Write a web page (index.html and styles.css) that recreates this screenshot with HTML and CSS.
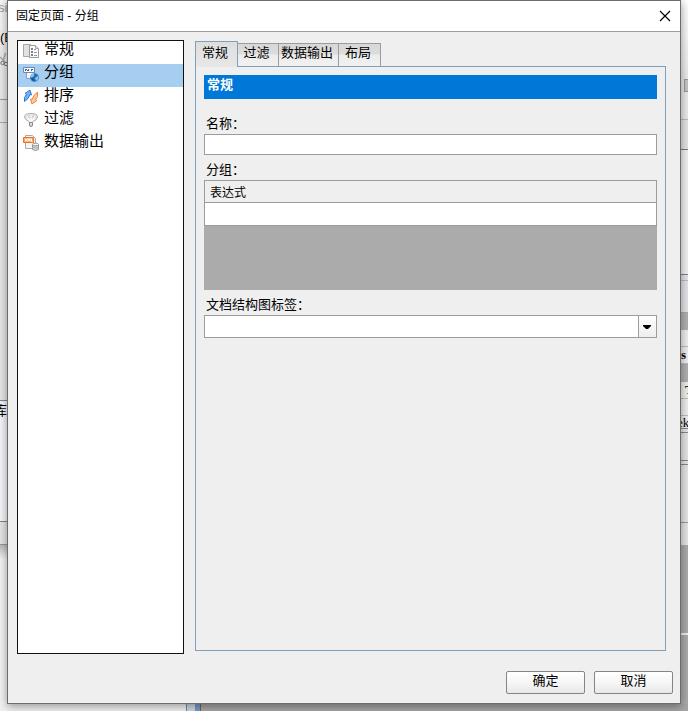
FILE: index.html
```html
<!DOCTYPE html>
<html lang="zh-CN">
<head>
<meta charset="utf-8">
<title>固定页面 - 分组</title>
<meta name="viewport" content="width=device-width, initial-scale=1">
<link rel="stylesheet" href="styles.css">
</head>
<body>
<div class="desktop">
  <div class="edge edge-left" aria-hidden="true">
    <div class="caption"><span>sig</span></div>
    <div class="menu"><span>(B</span></div>
    <div class="tools">
      <svg width="9" height="16" viewBox="0 0 9 16"><path d="M7.500 1L5 9M2 5l5 5" stroke="#aaa" stroke-width="1.500" fill="none"/><circle cx="4.500" cy="11" r="1.700" stroke="#777" fill="none"/><circle cx="8" cy="12" r="1.700" stroke="#777" fill="none"/></svg>
    </div>
    <div class="bar"></div>
    <div class="side"></div>
    <div class="tree"><span>库</span></div>
    <div class="status"></div>
    <div class="page"></div>
  </div>

  <main class="dialog">
    <header class="titlebar">
      <h1>固定页面 - 分组</h1>
      <button class="close" type="button" aria-label="关闭">
        <svg width="12" height="12" viewBox="0 0 12 12"><path d="M1 1l10 10M11 1L1 11" stroke="#000" stroke-width="1.2" fill="none"/></svg>
      </button>
    </header>
    <div class="content">
      <ul class="categories">
        <li><button type="button">
          <svg width="16" height="16" viewBox="0 0 16 16"><path d="M.5 1.500h7v12h-7z" fill="#e2e2e2" stroke="#a8a8a8"/><path d="M6.500 2.500h6l3 3v9h-9z" fill="#fafafa" stroke="#999"/><path d="M12.500 2.500v3h3" fill="#ddd" stroke="#aaa"/><path d="M8 6h2" stroke="#4a90d0" stroke-width="2"/><path d="M8 9h2" stroke="#f05a20" stroke-width="2"/><path d="M8 12h2" stroke="#3a94b8" stroke-width="2"/><path d="M11 6.500h2M11 9.500h3M11 12.500h3" stroke="#999"/></svg>
          <span>常规</span></button></li>
        <li><button type="button" class="selected" aria-current="true">
          <svg width="16" height="16" viewBox="0 0 16 16"><path d="M3.500 3.500h8v9h-8z" fill="#f3f5fa" stroke="#8a9cc0"/><path d="M.5 1.500h11v5H.5z" fill="#f5f8fd" stroke="#7187b4"/><path d="M2 3.500h2M5 3.500h1M8 3.500h2M2 4.500h1M4 4.500h2M8 4.500h1" stroke="#3f5f9c"/><circle cx="11.500" cy="11.500" r="4.300" fill="#286fb7"/><path d="M7.500 11q1-4 4-3.500l-1 3-2 1zM12 12l3-2q1 3-2 5z" fill="#8fc9ee"/><path d="M9.500 12l2 2-1 1-2-2z" fill="#174d8c"/></svg>
          <span>分组</span></button></li>
        <li><button type="button">
          <svg width="16" height="16" viewBox="0 0 16 16"><path d="M1.500 12.500v-4l2-3-1.500-1 5-3.500 1.500 5-1.500-.5-2 4z" fill="#6fb2fa" stroke="#2e78dc" stroke-linejoin="round"/><path d="M14.500 3v4.500l-2 3 1.500 1-5 3.500-1.500-5 1.500.5 2-4z" fill="#ffc797" stroke="#ef8146" stroke-linejoin="round"/></svg>
          <span>排序</span></button></li>
        <li><button type="button">
          <svg width="16" height="16" viewBox="0 0 16 16"><path d="M1.500 5q0-3.500 6.500-3.500T14.500 5q0 2.500-5 5v4q-1.500 1.500-3 0v-4q-5-2.500-5-5z" fill="#eee" stroke="#aaa"/><ellipse cx="8" cy="4.500" rx="5" ry="2" fill="#d6d6d6"/><path d="M4 3.500l3 6M12 3.500l-3 6M8 2.500v7" stroke="#fff"/><path d="M6.500 10.500h3v3q-1.500 2-3 0z" fill="#ddd" stroke="#888"/></svg>
          <span>过滤</span></button></li>
        <li><button type="button">
          <svg width="16" height="16" viewBox="0 0 16 16"><path d="M2.500.5h7l3 3v10h-10z" fill="#f5f5f5" stroke="#aaa"/><path d="M.5 2.500h10v5H.5z" fill="#ff9a50" stroke="#ed7326"/><path d="M2 3.500l2 3M4 3.500l-2 3M5 6.500v-3l1 2 1-2v3M8.500 3.500v3h1" stroke="#fff" fill="none"/><path d="M9.500 9.500h6v5q-3 2-6 0z" fill="#d6d6d6" stroke="#999"/><ellipse cx="12.500" cy="9.500" rx="3" ry="1.300" fill="#f5f5f5" stroke="#999"/><path d="M9.500 12q3 2 6 0" fill="none" stroke="#aaa"/></svg>
          <span>数据输出</span></button></li>
      </ul>

      <section class="settings">
        <div class="tabs" role="tablist">
          <button class="tab active" type="button" role="tab" aria-selected="true">常规</button>
          <button class="tab" type="button" role="tab" aria-selected="false">过滤</button>
          <button class="tab wide" type="button" role="tab" aria-selected="false">数据输出</button>
          <button class="tab" type="button" role="tab" aria-selected="false">布局</button>
        </div>
        <div class="panel" role="tabpanel">
          <h2>常规</h2>
          <div class="field first">
            <label for="name">名称：</label>
            <input id="name" type="text">
          </div>
          <div class="field">
            <label id="group-label" for="expression">分组：</label>
            <div class="grid-box">
              <table aria-labelledby="group-label">
                <thead><tr><th>表达式</th></tr></thead>
                <tbody><tr><td><input id="expression" type="text"></td></tr></tbody>
              </table>
            </div>
          </div>
          <div class="field">
            <label for="doc-map">文档结构图标签：</label>
            <div class="combo">
              <select id="doc-map"><option></option></select>
              <span class="arrow"><svg width="8" height="4" viewBox="0 0 8 4"><path d="M0 0h8v1L5 4H3L0 1z" fill="#000"/></svg></span>
            </div>
          </div>
        </div>
      </section>
    </div>
    <footer class="actions">
      <button type="button">确定</button>
      <button type="button">取消</button>
    </footer>
  </main>

  <div class="edge edge-right" aria-hidden="true">
    <div class="ribbon"></div>
    <div class="slider"><i></i></div>
    <div class="ribbon-end"></div>
    <div class="ruler"></div>
    <div class="canvas"></div>
    <div class="gap"></div>
    <div class="props-head"></div>
    <div class="dark"></div>
    <div class="row"></div>
    <div class="row"><b>s</b></div>
    <div class="dark"></div>
    <div class="row indent"><b>T</b></div>
    <div class="row"></div>
    <div class="row short"><span>ek</span></div>
    <div class="gap small"></div>
    <div class="help"></div>
    <div class="gap small"></div>
    <div class="output"></div>
    <div class="status"></div>
    <div class="work"></div>
    <div class="work-end"></div>
  </div>

  <div class="below" aria-hidden="true"><i class="paper"></i><i class="frame"></i><i class="blue"></i><i class="dark-area"></i></div>
</div>
</body>
</html>
```

FILE: styles.css
```css
* { box-sizing: border-box; }

body {
  margin: 0;
  font-family: "Liberation Sans", "Noto Sans CJK SC", sans-serif;
  font-size: 13px;
  line-height: 16px;
  color: #000;
}

button, input, select { font: inherit; color: inherit; border-radius: 0; }

.desktop {
  display: grid;
  grid-template-columns: 7px minmax(0, 1fr) 7px;
  grid-template-rows: 1fr 7px;
  min-height: 100vh;
  overflow: hidden;
  background: #999;
}

/* Dialog */
.dialog {
  position: relative;
  display: flex;
  flex-direction: column;
  background: #efefef;
  border: 1px solid #6c6c6c;
  box-shadow: 0 2px 9px rgba(0, 0, 0, .4);
}

.titlebar {
  display: flex;
  align-items: center;
  justify-content: space-between;
  height: 31px;
  padding: 0 8px;
  background: #fff;
  border-bottom: 1px solid #9c9c9c;
}

h1 { margin: 0; font-size: 12px; font-weight: 400; }

.close {
  display: flex;
  padding: 1px;
  border: 0;
  background: none;
}

.content {
  flex: 1;
  display: flex;
  gap: 11px;
  padding: 8px 14px 0 9px;
}

.categories {
  width: 167px;
  margin: 0;
  padding: 0;
  list-style: none;
  background: #fff;
  border: 1px solid #111;
}

.categories button {
  display: flex;
  align-items: flex-start;
  gap: 5px;
  width: 100%;
  height: 23px;
  padding: 0 5px;
  border: 0;
  background: none;
  font-size: 15px;
  line-height: 16px;
}

.categories svg { flex: none; margin-top: 2px; }
.categories .selected { background: #a5cef1; }

.settings {
  flex: 1;
  display: flex;
  flex-direction: column;
  padding-bottom: 3px;
}

.tabs {
  position: relative;
  display: flex;
  align-items: flex-end;
  height: 27px;
  margin-bottom: -1px;
}

.tab {
  width: 41px;
  height: 24px;
  padding: 0 3px 5px 0;
  border: 1px solid #9c9c9c;
  border-left: 0;
  border-bottom-color: #7f9fba;
  background: linear-gradient(#d7d7d7, #dcdcdc 45%, #ececec 50%, #f1f1f1);
}

.tab.wide { width: 60px; }
.tab:last-child { width: 42px; }

.tab.active {
  width: 43px;
  height: 26px;
  padding-bottom: 4px;
  border: 1px solid #7f9fba;
  border-bottom: 0;
  background: linear-gradient(#dedede, #e7e7e7);
}

.panel {
  flex: 1;
  padding: 8px;
  border: 1px solid #7f9fba;
}

h2 {
  height: 24px;
  margin: 0;
  padding: 2px 3px;
  background: #0078d7;
  color: #fff;
  font-size: 13px;
  font-weight: 700;
}

.field { margin-top: 7px; }
.field.first { margin-top: 17px; }

label { display: block; height: 18px; padding-left: 2px; }

.field > input {
  display: block;
  width: 100%;
  height: 21px;
  padding: 0 3px;
  border: 1px solid #9c9c9c;
  background: #fff;
}

.grid-box { height: 110px; background: #ababab; }

table {
  width: 100%;
  border-collapse: collapse;
  background: #fff;
  font-size: 12px;
}

th, td { height: 22px; padding: 0; border: 1px solid #9c9c9c; }
th { padding: 3px 5px 0; background: #efefef; font-weight: 400; text-align: left; }
td input { display: block; width: 100%; height: 22px; padding: 0 5px; border: 0; background: none; }

.combo { position: relative; }

select {
  display: block;
  width: 100%;
  height: 23px;
  padding: 0 22px 0 3px;
  appearance: none;
  border: 1px solid #9c9c9c;
  background: #fff;
}

.arrow {
  position: absolute;
  inset: 1px 1px 1px auto;
  display: flex;
  align-items: center;
  justify-content: center;
  width: 18px;
  padding-right: 1px;
  border-left: 1px solid #9c9c9c;
  background: linear-gradient(#fff, #eee);
  pointer-events: none;
}

.actions {
  display: flex;
  justify-content: flex-end;
  gap: 9px;
  padding: 17px 7px 9px;
}

.actions button {
  width: 79px;
  height: 23px;
  padding: 0 0 4px;
  border: 1px solid #858585;
  border-radius: 2px;
  background: linear-gradient(#fff, #f6f6f6 50%, #e8e8e8);
}

/* Application window behind the dialog */
.edge { display: flex; flex-direction: column; overflow: hidden; }
.edge > div { flex: none; overflow: hidden; white-space: nowrap; }

.edge-left > .caption { height: 30px; background: #f5f5f5; color: #999; }
.edge-left > .menu { height: 22px; background: #eee; }
.edge-left > .tools { height: 47px; background: #eaeaea; }
.edge-left > .bar { height: 24px; border-top: 1px solid #999; border-bottom: 1px solid #aaa; background: #e7e7e7; }
.edge-left > .side { height: 277px; background: #e7e7e7; }
.edge-left > .tree {
  height: 121px;
  padding-top: 2px;
  border-top: 1px solid #85868d;
  background: #f5f6f9;
  display: flex;
  justify-content: flex-end;
}
.edge-left > .status { height: 24px; border-top: 1px solid #85868d; border-bottom: 1px solid #999; background: #e5e5e5; }
.edge-left > .page { flex: 1; background: linear-gradient(#bbb, #f4f4f4 14px); }
.caption span, .menu span { display: block; }
.caption span, .tools svg { margin-left: -2px; }

.edge-right > .ribbon { height: 79px; background: linear-gradient(#fff, #eaeaea); }
.edge-right > .slider { height: 13px; background: #eaeaea; }
.slider i { display: block; width: 5px; height: 13px; margin-left: 3px; border: 1px solid #999; background: #c4c4c4; }
.edge-right > .ribbon-end { height: 28px; border-bottom: 1px solid #bbb; background: #eaeaea; }
.edge-right > .ruler { height: 30px; border-bottom: 1px solid #777889; background: #e4e4e4; }
.edge-right > .canvas { height: 125px; border-bottom: 1px solid #788490; background: #f1f1f1; }
.edge-right > .gap { height: 6px; border-bottom: 1px solid #bbb; background: #e5e5e5; }
.edge-right > .gap.small { height: 4px; border-bottom-color: #888; }
.edge-right > .props-head { height: 31px; background: #e3e3e8; }
.edge-right > .dark { height: 18px; border-top: 1px solid #aaa; background: #b0b0b0; }
.edge-right > .row {
  height: 17px;
  border-bottom: 1px solid #bbb;
  background: #eee;
  font-family: "Liberation Serif", serif;
}
.edge-right > .indent { padding-left: 4px; }
.edge-right > .short { height: 13px; border-bottom-color: #888; line-height: 14px; }
.short span { display: block; margin-left: -4px; }
.edge-right > .help { height: 28px; border-bottom: 1px solid #888; background: #e5e5e5; }
.edge-right > .output { height: 58px; border-bottom: 1px solid #999; background: #e5e5e5; }
.edge-right > .status { height: 22px; background: #e5e5e5; }
.edge-right > .work { height: 90px; border-bottom: 2px solid #eee; background: #aaa; }
.edge-right > .work-end { flex: 1; background: #aaa; }

.below { grid-column: 1 / -1; display: flex; }
.paper { width: 186px; background: #f1f1f1; }
.frame { width: 9px; border-left: 1px solid #888; background: #cbd6e5; }
.blue { width: 6px; border-right: 1px solid #666; background: #7898c4; }
.dark-area { flex: 1; background: #a5a5a5; }
```
